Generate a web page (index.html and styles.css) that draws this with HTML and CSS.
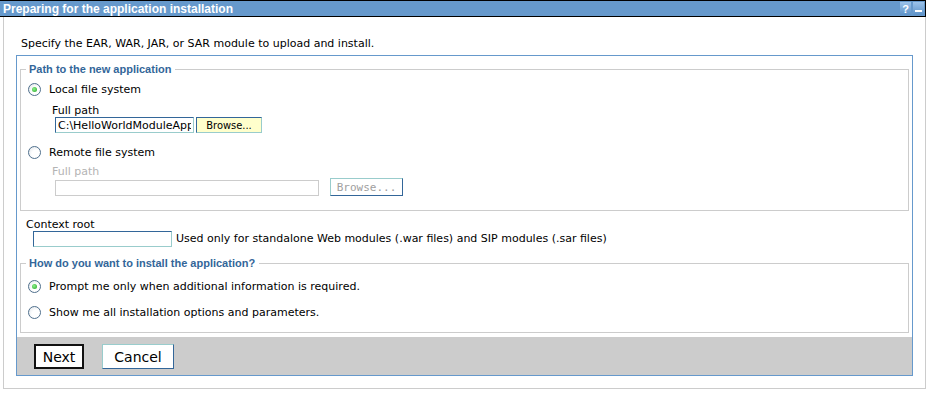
FILE: index.html
```html
<!DOCTYPE html>
<html lang="en">
<head>
    <meta charset="UTF-8" />
    <title>Preparing for the application installation</title>
    <link rel="stylesheet" href="styles.css">
</head>
<body>
    <div class="portlet">
        <div class="titlebar">
            <span class="title">Preparing for the application installation</span>
            <span class="tools">
                <span class="tool">?</span>
                <span class="tool tool-min"><span class="bar"></span></span>
            </span>
        </div>

        <div class="portlet-body">
            <p class="intro">Specify the EAR, WAR, JAR, or SAR module to upload and install.</p>

            <div class="wizard">
                <fieldset class="group group-path">
                    <legend>Path to the new application</legend>

                    <label class="option">
                        <span class="radio checked"></span>
                        Local file system
                    </label>
                    <div class="path">
                        <div class="field-label">Full path</div>
                        <div class="field-row">
                            <input class="text" type="text" value="C:\HelloWorldModuleApp.war">
                            <button class="browse">Browse...</button>
                        </div>
                    </div>

                    <label class="option option-remote">
                        <span class="radio"></span>
                        Remote file system
                    </label>
                    <div class="path path-disabled">
                        <div class="field-label">Full path</div>
                        <div class="field-row">
                            <input class="text text-wide" type="text" disabled>
                            <button class="browse browse-disabled" disabled>Browse...</button>
                        </div>
                    </div>
                </fieldset>

                <div class="context">
                    <div class="field-label">Context root</div>
                    <div class="field-row">
                        <input class="text" type="text">
                        <span class="hint">Used only for standalone Web modules (.war files) and SIP modules (.sar files)</span>
                    </div>
                </div>

                <fieldset class="group group-install">
                    <legend>How do you want to install the application?</legend>

                    <label class="option">
                        <span class="radio checked"></span>
                        Prompt me only when additional information is required.
                    </label>
                    <label class="option option-all">
                        <span class="radio"></span>
                        Show me all installation options and parameters.
                    </label>
                </fieldset>

                <div class="button-bar">
                    <button class="btn btn-default">Next</button>
                    <button class="btn">Cancel</button>
                </div>
            </div>
        </div>
    </div>
</body>
</html>
```

FILE: styles.css
```css
:root {
    --title-bg: #6699cc;
    --wizard-border: #6699cc;
    --legend: #336699;
    --line: #cccccc;
    --edge-dark: #336699;
    --edge-light: #99cccc;
    --bar-bg: #cccccc;
}

* {
    box-sizing: border-box;
}

body {
    margin: 0;
    font-family: "DejaVu Sans", Verdana, sans-serif;
    font-size: 11px;
    line-height: 12px;
    color: #000000;
    background: #ffffff;
}

.portlet {
    width: 926px;
}

/* title bar */
.titlebar {
    display: flex;
    align-items: center;
    justify-content: space-between;
    height: 17px;
    padding-left: 3px;
    background: var(--title-bg);
    border: 1px solid #000000;
    border-left: none;
}

.title {
    font-family: "Liberation Sans", Arial, sans-serif;
    font-weight: 700;
    font-size: 12px;
    color: #ffffff;
}

.tools {
    display: flex;
    gap: 2px;
    padding-right: 1px;
}

.tool {
    display: flex;
    align-items: center;
    justify-content: center;
    width: 11px;
    height: 13px;
    background: linear-gradient(#9cc3ea, #5d92c8);
    color: #ffffff;
    font-family: "Liberation Sans", Arial, sans-serif;
    font-weight: 700;
    font-size: 11px;
}

.tool-min {
    align-items: flex-end;
    padding-bottom: 3px;
}

.tool-min .bar {
    width: 7px;
    height: 2px;
    background: #ffffff;
}

/* body */
.portlet-body {
    margin-left: 3px;
    padding: 21px 12px 12px;
    border: 1px solid var(--line);
    border-top: none;
}

.intro {
    margin: 0 0 5px 5px;
}

.wizard {
    border: 1px solid var(--wizard-border);
}

.group {
    margin: 7px 3px 0;
    padding: 0 0 14px 7px;
    border: 1px solid var(--line);
}

.group legend {
    margin-left: -2px;
    padding: 0 4px 0 3px;
    font-family: "Liberation Sans", Arial, sans-serif;
    font-weight: 700;
    font-size: 11px;
    color: var(--legend);
}

.option {
    display: flex;
    align-items: center;
    gap: 8px;
    height: 13px;
    margin-top: 8px;
}

.option-remote {
    margin-top: 13px;
}

.option-all {
    margin-top: 13px;
}

.group-install {
    margin-top: 10px;
    padding-bottom: 13px;
}

.group-install .option:first-of-type {
    margin-top: 11px;
}

.radio {
    width: 13px;
    height: 13px;
    flex: none;
    display: flex;
    align-items: center;
    justify-content: center;
    border: 1px solid #4f6f8c;
    border-radius: 50%;
    background: radial-gradient(circle at 65% 65%, #ffffff 40%, #dde3e8 100%);
}

.radio.checked::after {
    content: "";
    width: 5px;
    height: 5px;
    border-radius: 50%;
    background: radial-gradient(circle at 40% 40%, #8ef08e, #1fa51f);
}

.path {
    padding-left: 24px;
}

.path .field-label {
    margin-top: 9px;
}

.path-disabled .field-label {
    margin-top: 7px;
    color: #b4b4b4;
}

.field-row {
    display: flex;
    align-items: flex-end;
    margin-left: 3px;
}

.text {
    width: 139px;
    height: 16px;
    margin: 0;
    padding: 0 2px;
    font: inherit;
    border: 1px solid;
    border-color: var(--edge-dark) var(--edge-light) var(--edge-light) var(--edge-dark);
    background: #ffffff;
    overflow: hidden;
}

.text-wide {
    width: 264px;
    border-color: var(--line);
}

.browse {
    width: 66px;
    height: 16px;
    margin: 0 0 0 2px;
    padding: 0;
    font-family: "DejaVu Sans Condensed", "DejaVu Sans", sans-serif;
    font-size: 11px;
    color: #000000;
    background: #ffffcc;
    border: 1px solid;
    border-color: var(--edge-dark) var(--edge-light) var(--edge-light) var(--edge-dark);
}

.browse-disabled {
    width: 73px;
    height: 18px;
    margin-left: 11px;
    font-family: "DejaVu Sans Mono", monospace;
    color: #a0a0a0;
    background: #ffffff;
    border-color: var(--edge-light) var(--edge-dark) var(--edge-dark) var(--edge-light);
}

/* context root */
.context {
    margin: 7px 0 0 9px;
}

.context .field-label {
    padding-top: 1px;
}

.context .field-row {
    align-items: center;
    margin-left: 7px;
}

.hint {
    margin-left: 4px;
}

/* buttons */
.button-bar {
    display: flex;
    gap: 18px;
    margin-top: 4px;
    padding: 7px 17px 6px;
    background: var(--bar-bg);
}

.btn {
    width: 72px;
    height: 25px;
    padding: 0;
    font-family: "DejaVu Sans", Verdana, sans-serif;
    font-size: 14px;
    color: #000000;
    background: #ffffff;
    border: 1px solid;
    border-color: var(--edge-light) var(--edge-dark) var(--edge-dark) var(--edge-light);
}

.btn-default {
    width: 50px;
    border: 2px solid #111111;
}
```
